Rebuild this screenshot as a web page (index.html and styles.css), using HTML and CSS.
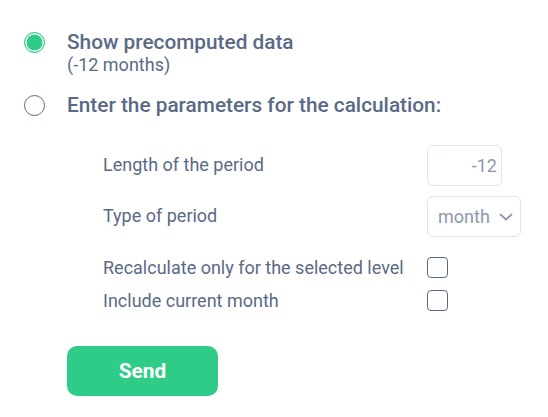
FILE: index.html
```html
<!DOCTYPE html>
<html>
<head>
  <meta charset="utf-8">
  <title>Precomputed data</title>
  <link rel="stylesheet" href="styles.css">
</head>
<body>
  <div class="panel">
    <label class="option">
      <span class="radio checked"></span>
      <span class="option_text">
        <span class="option_title">Show precomputed data</span>
        <span class="option_sub">(-12 months)</span>
      </span>
    </label>

    <label class="option second">
      <span class="radio"></span>
      <span class="option_text">
        <span class="option_title">Enter the parameters for the calculation:</span>
      </span>
    </label>

    <div class="params fields">
      <span class="label">Length of the period</span>
      <span class="input_box number">-12</span>

      <span class="label">Type of period</span>
      <span class="input_box select">month
        <svg width="14" height="8" viewBox="0 0 14 8"><path d="M1.5 1.5 L7 6.5 L12.5 1.5" fill="none" stroke="#8c98ad" stroke-width="1.8" stroke-linecap="round" stroke-linejoin="round"/></svg>
      </span>
    </div>

    <div class="params checks">
      <span class="label">Recalculate only for the selected level</span>
      <span class="checkbox"></span>

      <span class="label">Include current month</span>
      <span class="checkbox"></span>
    </div>

    <button class="send">Send</button>
  </div>
</body>
</html>
```

FILE: styles.css
```css
body {
  margin: 0;
  font-family: Roboto, "Liberation Sans", sans-serif;
  background-color: #fff;
  color: #5a6a86;
}

.panel {
  padding: 30px 0 0 24px;
}

.option {
  display: flex;
  align-items: flex-start;
}

.option.second {
  margin-top: 17px;
}

.radio {
  width: 21px;
  height: 21px;
  box-sizing: border-box;
  border: 1.5px solid #5a6a86;
  border-radius: 50%;
  background: #fff;
  margin-top: 1.5px;
  flex: none;
}

.radio.checked {
  border-color: #2ecc87;
  background: #2ecc87;
  box-shadow: inset 0 0 0 1.5px #fff;
}

.option_text {
  display: flex;
  flex-direction: column;
  margin-left: 22px;
}

.option_title {
  font-size: 20.8px;
  line-height: 24px;
  font-weight: 500;
}

.option_sub {
  font-size: 18px;
  line-height: 22px;
}

.params {
  display: grid;
  grid-template-columns: 324px auto;
  align-items: center;
  justify-items: start;
  margin-left: 79px;
  font-size: 18px;
}

.fields {
  grid-auto-rows: 41px;
  row-gap: 10px;
  margin-top: 28px;
}

.fields .label {
  padding-bottom: 2px;
}

.checks {
  grid-auto-rows: 22px;
  row-gap: 11px;
  margin-top: 19px;
}

.input_box {
  box-sizing: border-box;
  height: 41px;
  border: 1px solid #dfe3ea;
  border-radius: 6px;
  display: flex;
  align-items: center;
  color: #8c98ad;
  font-size: 18px;
}

.number {
  width: 75px;
  justify-content: flex-end;
  padding-right: 4px;
}

.select {
  width: 94px;
  padding: 0 7px 0 10px;
  justify-content: space-between;
}

.checkbox {
  width: 21px;
  height: 21px;
  box-sizing: border-box;
  border: 1.5px solid #5a6a86;
  border-radius: 4px;
}

.send {
  margin: 35px 0 0 43px;
  width: 151px;
  height: 50px;
  border: none;
  border-radius: 10px;
  background: #2ecc87;
  color: #fff;
  font-family: Roboto, "Liberation Sans", sans-serif;
  font-size: 20.8px;
  font-weight: 700;
}
```
